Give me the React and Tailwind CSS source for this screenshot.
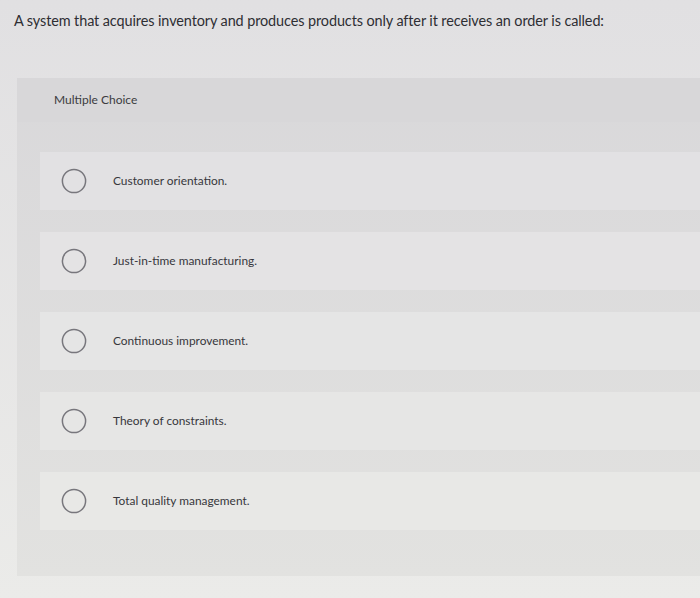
import React from "react";

const options = [
  "Customer orientation.",
  "Just-in-time manufacturing.",
  "Continuous improvement.",
  "Theory of constraints.",
  "Total quality management.",
];

function Radio() {
  return (
    <svg width="26" height="26" viewBox="0 0 26 26" className="shrink-0">
      <circle cx="13" cy="13" r="11.6" fill="none" stroke="#77767c" strokeWidth="1.5" />
    </svg>
  );
}

export default function App() {
  return (
    <div
      className="w-[700px] h-[598px] overflow-hidden flex flex-col bg-linear-to-b from-[#e1e0e2] to-[#ebebe9]"
      style={{ fontFamily: "Lato, 'Open Sans', sans-serif" }}
    >
      <div className="h-[78px] pl-[14px] pt-[11px] shrink-0">
        <p className="text-[14.45px] leading-[20px] text-[#2e2e33] tracking-[-0.1px]">
          A system that acquires inventory and produces products only after it receives an order is called:
        </p>
      </div>
      <div className="ml-[17px] h-[498px] shrink-0 flex flex-col bg-linear-to-b from-[#d9d8da] to-[#e2e2e0]">
        <div className="h-[44px] pl-[37px] pt-[14px] shrink-0 bg-[#d8d7d9]">
          <span className="block text-[12px] leading-[16px] text-[#3b3b40]">Multiple Choice</span>
        </div>
        <div className="flex flex-col gap-[22px] pl-[23px] pt-[30px]">
          {options.map((o, i) => (
            <div
              key={i}
              className={
                "h-[58px] flex items-center pl-[21px] " +
                (i === 0
                  ? "bg-[#e2e1e3]"
                  : i === 1
                  ? "bg-[#e4e3e4]"
                  : i === 2
                  ? "bg-[#e5e5e5]"
                  : i === 3
                  ? "bg-[#e6e6e5]"
                  : "bg-[#e8e8e6]")
              }
            >
              <Radio />
              <span className="ml-[26px] text-[11.9px] text-[#37373c]">{o}</span>
            </div>
          ))}
        </div>
      </div>
    </div>
  );
}
